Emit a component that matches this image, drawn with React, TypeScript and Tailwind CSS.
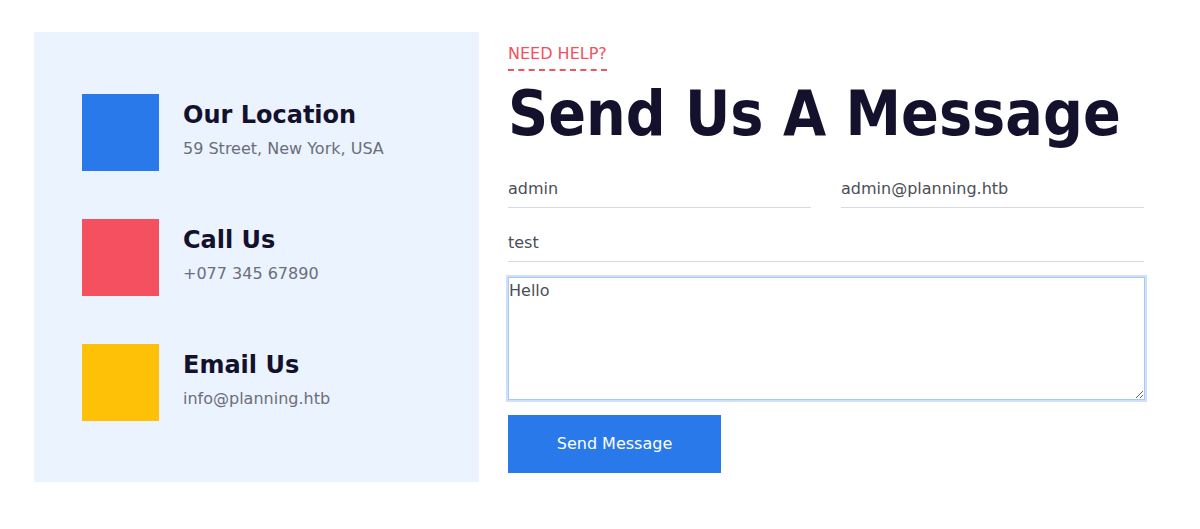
import React from "react";

const font = { fontFamily: '"DejaVu Sans", sans-serif' };

function Info({ color, title, text }: { color: string; title: string; text: string }) {
  return (
    <div className="flex items-start gap-6">
      <div className={`w-[77px] h-[77px] shrink-0 ${color}`} />
      <div className="pt-[6px]">
        <div className="text-[24px] font-bold text-[#13112c] leading-[30px]">{title}</div>
        <div className="text-[16px] text-[#6b6e7a] leading-[24px] mt-[7px]">{text}</div>
      </div>
    </div>
  );
}

export default function App() {
  return (
    <div className="w-[1200px] h-[529px] bg-white flex pl-[34px] pt-[32px] gap-[29px]" style={font}>
      <div className="w-[445px] h-[450px] bg-[#ebf3fe] pl-[48px] pt-[62px] flex flex-col gap-[48px]">
        <Info color="bg-[#2979ea]" title="Our Location" text="59 Street, New York, USA" />
        <Info color="bg-[#f4505f]" title="Call Us" text="+077 345 67890" />
        <Info color="bg-[#ffc107]" title="Email Us" text="info@planning.htb" />
      </div>
      <div className="w-[636px] flex flex-col">
        <div className="mt-[11px] text-[16px] leading-[22px] text-[#f4505f] self-start pb-[4px] border-b-2 border-dashed border-[#f4505f]">
          NEED HELP?
        </div>
        <h1
          className="text-[62px] font-bold font-stretch-condensed text-[#13112c] leading-[70px] mt-[8px] whitespace-nowrap"
          style={{ fontFamily: '"DejaVu Sans Condensed", "DejaVu Sans", sans-serif' }}
        >
          Send Us A Message
        </h1>
        <div className="flex gap-[30px] mt-[29px]">
          <div className="flex-1 border-b border-[#d6d9de] text-[16px] text-[#4b4e57] pb-[7px] leading-[22px]">admin</div>
          <div className="flex-1 border-b border-[#d6d9de] text-[16px] text-[#4b4e57] pb-[7px] leading-[22px]">admin@planning.htb</div>
        </div>
        <div className="mt-[24px] border-b border-[#d6d9de] text-[16px] text-[#4b4e57] pb-[7px] leading-[22px]">test</div>
        <textarea
          defaultValue="Hello"
          className="mt-[15px] h-[123px] w-[637px] border border-[#a9c8f3] ring-2 ring-[#cfe0fa] outline-none text-[16px] text-[#4b4e57] leading-[22px] p-0 pt-[2px] resize-y"
          style={font}
        />
        <button
          className="mt-[15px] w-[213px] h-[58px] bg-[#2979ea] text-white text-[16px] self-start"
          style={font}
        >
          Send Message
        </button>
      </div>
    </div>
  );
}
